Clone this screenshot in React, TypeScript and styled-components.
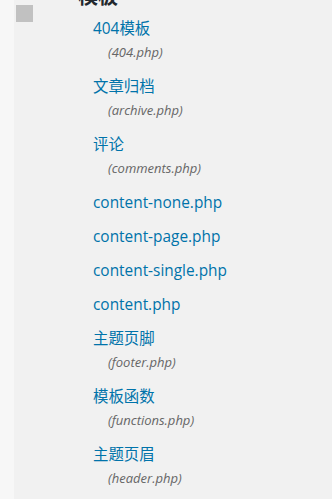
import React from "react";
import styled, { createGlobalStyle } from "styled-components";

const GlobalStyle = createGlobalStyle`
  html, body {
    margin: 0;
    padding: 0;
    background: #f1f1f1;
  }
  body {
    font-family: "Open Sans", "Noto Sans CJK SC", sans-serif;
    overflow: hidden;
  }
`;

const Page = styled.div`
  display: flex;
  height: 499px;
  overflow: hidden;
`;

const Gutter = styled.div`
  width: 14px;
  flex-shrink: 0;
  background: #f7f7f7;
`;

const Main = styled.div`
  flex: 1;
  display: flex;
  background: #f1f1f1;
  padding-left: 2px;
`;

const Marker = styled.div`
  width: 17px;
  height: 17px;
  margin-top: 5px;
  background: #c1c1c1;
  flex-shrink: 0;
`;

const Sidebar = styled.div`
  padding-left: 45px;
`;

const Heading = styled.h2`
  margin: -16px 0 0;
  font-size: 20px;
  line-height: 24px;
  font-weight: 700;
  color: #23282d;
  font-family: "Noto Sans CJK SC", sans-serif;
`;

const FileList = styled.ul`
  list-style: none;
  margin: 4px 0 0 15px;
  padding: 0;
`;

const Item = styled.li`
  padding: 6px 0;
`;

const FileLink = styled.a`
  display: block;
  font-size: 15.4px;
  line-height: 22px;
  color: #0073aa;
  text-decoration: none;
`;

const FileName = styled.span`
  display: block;
  margin: 1px 0 1px 15px;
  font-size: 13px;
  line-height: 22px;
  font-style: italic;
  color: #666;
`;

const files: { label: string; file?: string }[] = [
  { label: "404模板", file: "404.php" },
  { label: "文章归档", file: "archive.php" },
  { label: "评论", file: "comments.php" },
  { label: "content-none.php" },
  { label: "content-page.php" },
  { label: "content-single.php" },
  { label: "content.php" },
  { label: "主题页脚", file: "footer.php" },
  { label: "模板函数", file: "functions.php" },
  { label: "主题页眉", file: "header.php" },
];

const App: React.FC = () => {
  return (
    <Page>
      <GlobalStyle />
      <Gutter />
      <Main>
        <Marker />
        <Sidebar>
          <Heading>模板</Heading>
          <FileList>
            {files.map((f) => (
              <Item key={f.label}>
                <FileLink href="#">
                  {f.label}
                  {f.file && <FileName>({f.file})</FileName>}
                </FileLink>
              </Item>
            ))}
          </FileList>
        </Sidebar>
      </Main>
    </Page>
  );
};

export default App;
